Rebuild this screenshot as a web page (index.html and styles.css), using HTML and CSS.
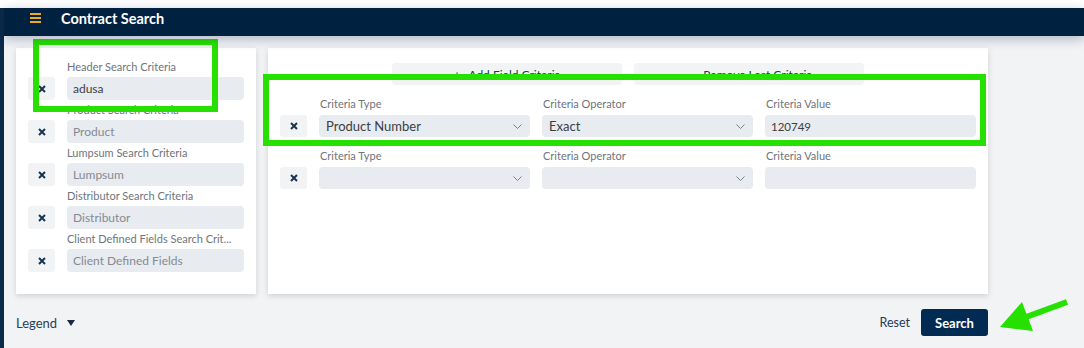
FILE: index.html
```html
<!DOCTYPE html>
<html lang="en">
<head>
  <meta charset="UTF-8" />
  <meta name="viewport" content="width=device-width, initial-scale=1.0" />
  <title>Contract Search</title>
  <link rel="stylesheet" href="styles.css">
</head>
<body>
<div class="page">
  <div class="rail"></div>
  <div class="main">
    <div class="topbar">
      <svg class="burger" width="11" height="10" viewBox="0 0 11 10"><rect y="0" width="11" height="2"/><rect y="4" width="11" height="2"/><rect y="8" width="11" height="2"/></svg>
      <span class="title">Contract Search</span>
    </div>
    <div class="content">
      <div class="cards">
        <div class="card card-left">
          <div class="field">
            <label>Header Search Criteria</label>
            <button class="clear"><svg width="8" height="8" viewBox="0 0 8 8"><path d="M1 1L7 7M7 1L1 7"/></svg></button>
            <input class="text" value="adusa" />
          </div>
          <div class="field">
            <label>Product Search Criteria</label>
            <button class="clear"><svg width="8" height="8" viewBox="0 0 8 8"><path d="M1 1L7 7M7 1L1 7"/></svg></button>
            <input class="text" placeholder="Product" />
          </div>
          <div class="field">
            <label>Lumpsum Search Criteria</label>
            <button class="clear"><svg width="8" height="8" viewBox="0 0 8 8"><path d="M1 1L7 7M7 1L1 7"/></svg></button>
            <input class="text" placeholder="Lumpsum" />
          </div>
          <div class="field">
            <label>Distributor Search Criteria</label>
            <button class="clear"><svg width="8" height="8" viewBox="0 0 8 8"><path d="M1 1L7 7M7 1L1 7"/></svg></button>
            <input class="text" placeholder="Distributor" />
          </div>
          <div class="field">
            <label>Client Defined Fields Search Crit...</label>
            <button class="clear"><svg width="8" height="8" viewBox="0 0 8 8"><path d="M1 1L7 7M7 1L1 7"/></svg></button>
            <input class="text" placeholder="Client Defined Fields" />
          </div>
        </div>
        <div class="card card-right">
          <div class="actions">
            <button class="action"><span class="sign">+</span>Add Field Criteria</button>
            <button class="action"><span class="sign">&mdash;</span>Remove Last Criteria</button>
          </div>
          <div class="crit">
            <label class="c1">Criteria Type</label>
            <label>Criteria Operator</label>
            <label>Criteria Value</label>
            <button class="clear"><svg width="8" height="8" viewBox="0 0 8 8"><path d="M1 1L7 7M7 1L1 7"/></svg></button>
            <div class="select">Product Number<svg class="chev" width="9" height="5" viewBox="0 0 9 5"><path d="M0.5 0.5L4.5 4.5L8.5 0.5"/></svg></div>
            <div class="select">Exact<svg class="chev" width="9" height="5" viewBox="0 0 9 5"><path d="M0.5 0.5L4.5 4.5L8.5 0.5"/></svg></div>
            <div class="value">120749</div>
          </div>
          <div class="crit">
            <label class="c1">Criteria Type</label>
            <label>Criteria Operator</label>
            <label>Criteria Value</label>
            <button class="clear"><svg width="8" height="8" viewBox="0 0 8 8"><path d="M1 1L7 7M7 1L1 7"/></svg></button>
            <div class="select"><svg class="chev" width="9" height="5" viewBox="0 0 9 5"><path d="M0.5 0.5L4.5 4.5L8.5 0.5"/></svg></div>
            <div class="select"><svg class="chev" width="9" height="5" viewBox="0 0 9 5"><path d="M0.5 0.5L4.5 4.5L8.5 0.5"/></svg></div>
            <div class="value"></div>
          </div>
        </div>
      </div>
      <div class="footer">
        <span class="legend">Legend</span>
        <svg class="caret" width="8" height="6" viewBox="0 0 8 6"><path d="M0 0H8L4 6Z"/></svg>
        <span class="reset">Reset</span>
        <button class="search">Search</button>
      </div>
    </div>
  </div>
</div>
<svg class="marks" width="1084" height="348" viewBox="0 0 1084 348">
  <rect x="36" y="42" width="179" height="67" />
  <rect x="266" y="77" width="717" height="66" />
  <line x1="1018" y1="320" x2="1067" y2="302" />
  <polygon points="1000,327 1022,302 1033,331" />
</svg>
</body>
</html>
```

FILE: styles.css
```css
body { margin: 0; width: 1084px; height: 348px; overflow: hidden; background: #fff; font-family: Lato, 'Open Sans', sans-serif; color: #3a3f46; }
.page { display: flex; height: 340px; margin-top: 8px; }
.rail { width: 4px; background: #0c2a4a; }
.main { flex: 1; display: flex; flex-direction: column; background: #f1f3f5; }
.topbar { height: 28px; box-sizing: border-box; padding: 0 0 8px 26px; display: flex; align-items: center; background: #00213f; box-shadow: 0 3px 12px rgba(0, 25, 60, 0.28); position: relative; z-index: 1; }
.burger { fill: #f0a81c; }
.title { margin-left: 20px; color: #fff; font-weight: 700; font-size: 14.5px; }
.content { flex: 1; padding: 12px 96px 0 12px; }
.cards { display: flex; gap: 12px; height: 246px; }
.card { background: #fff; box-shadow: 0 2px 6px rgba(0, 0, 0, 0.14); box-sizing: border-box; }
.card-left { width: 240px; padding: 9px 12px 0 12px; }
.card-right { flex: 1; padding: 15px 12px 0 12px; }
.field { display: grid; grid-template-columns: 27px 1fr; grid-template-rows: 20px 23px; column-gap: 12px; }
.field label { grid-column: 2; font-size: 11px; line-height: 20px; color: #6f747b; white-space: nowrap; overflow: hidden; }
.clear { display: flex; align-items: center; justify-content: center; padding: 0; border: none; border-radius: 3px; background: #f1f3f5; }
.clear svg { stroke: #1a3350; stroke-width: 2; fill: none; }
.text { min-width: 0; border: none; border-radius: 4px; background: #e8ebef; padding: 0 6px; font-family: inherit; font-size: 12px; color: #3b3f45; outline: none; }
.text::placeholder { color: #858b93; }
.actions { display: flex; justify-content: center; gap: 12px; }
.action { width: 230px; height: 22px; border: none; border-radius: 4px; background: #f1f3f5; font-family: inherit; font-size: 12px; color: #1f3a5a; }
.sign { margin-right: 8px; }
.crit { display: grid; grid-template-columns: 27px repeat(3, 1fr); grid-template-rows: 21px 22px; column-gap: 12px; margin-top: 9px; }
.crit label { font-size: 11px; line-height: 20px; color: #6f747b; padding-left: 1px; }
.crit .c1 { grid-column: 2; }
.select, .value { display: flex; align-items: center; border-radius: 4px; background: #e8ebef; padding: 0 7px; font-size: 13px; color: #3a3f46; }
.value { font-size: 11.5px; padding-left: 6px; }
.chev { margin-left: auto; margin-right: 1px; stroke: #7a8088; stroke-width: 1; fill: none; }
.footer { display: flex; align-items: center; padding-top: 15px; }
.legend { font-size: 13px; color: #2a3f58; }
.caret { margin-left: 10px; fill: #1a2a40; }
.reset { margin-left: auto; margin-right: 11px; font-size: 12.5px; color: #1f3a5a; }
.search { height: 27px; width: 67px; border: none; border-radius: 3px; background: #012b52; color: #fff; font-family: inherit; font-weight: 700; font-size: 13px; }
.marks { position: absolute; left: 0; top: 0; pointer-events: none; }
.marks rect { fill: none; stroke: #26e000; stroke-width: 6; }
.marks line { stroke: #26e000; stroke-width: 6; }
.marks polygon { fill: #26e000; }
```
